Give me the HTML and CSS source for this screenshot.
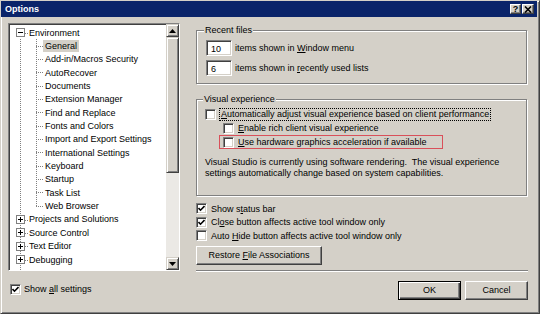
FILE: index.html
```html
<!DOCTYPE html>
<html lang="en">
<head>
    <meta charset="UTF-8">
    <title>Options</title>
    <link rel="stylesheet" href="styles.css">
</head>
<body>

<div class="dialog">
    <div class="titlebar">
        <span class="title">Options</span>
        <div class="caption-btns">
            <span class="cbtn help">?</span>
            <span class="cbtn close">
                <svg width="8" height="7" viewBox="0 0 8 7"><path d="M1 0.5 L7 6.5 M7 0.5 L1 6.5" stroke="#000" stroke-width="1.6"/></svg>
            </span>
        </div>
    </div>

    <div class="main">
        <div class="left">
            <div class="tree">
                <div class="tree-items">
                    <div class="node"><span class="exp open"></span><span class="node-label">Environment</span></div>
                    <div class="rest">
                        <div class="children">
                            <div class="leaf"><span class="leaf-label selected">General</span></div>
                            <div class="leaf"><span class="leaf-label">Add-in/Macros Security</span></div>
                            <div class="leaf"><span class="leaf-label">AutoRecover</span></div>
                            <div class="leaf"><span class="leaf-label">Documents</span></div>
                            <div class="leaf"><span class="leaf-label">Extension Manager</span></div>
                            <div class="leaf"><span class="leaf-label">Find and Replace</span></div>
                            <div class="leaf"><span class="leaf-label">Fonts and Colors</span></div>
                            <div class="leaf"><span class="leaf-label">Import and Export Settings</span></div>
                            <div class="leaf"><span class="leaf-label">International Settings</span></div>
                            <div class="leaf"><span class="leaf-label">Keyboard</span></div>
                            <div class="leaf"><span class="leaf-label">Startup</span></div>
                            <div class="leaf"><span class="leaf-label">Task List</span></div>
                            <div class="leaf"><span class="leaf-label">Web Browser</span></div>
                        </div>
                        <div class="node"><span class="exp"></span><span class="node-label">Projects and Solutions</span></div>
                        <div class="node"><span class="exp"></span><span class="node-label">Source Control</span></div>
                        <div class="node"><span class="exp"></span><span class="node-label">Text Editor</span></div>
                        <div class="node"><span class="exp"></span><span class="node-label">Debugging</span></div>
                        <div class="node-spacer"></div>
                    </div>
                </div>
                <div class="scrollbar">
                    <span class="sb-btn">
                        <svg width="7" height="4" viewBox="0 0 7 4"><polygon points="3.5,0 7,4 0,4" fill="#000"/></svg>
                    </span>
                    <span class="sb-thumb"></span>
                    <span class="sb-track"></span>
                    <span class="sb-btn">
                        <svg width="7" height="4" viewBox="0 0 7 4"><polygon points="0,0 7,0 3.5,4" fill="#000"/></svg>
                    </span>
                </div>
            </div>
            <div class="check show-all">
                <span class="box checked"><svg width="7" height="7" viewBox="0 0 7 7"><path d="M0.5 3 L2.5 5.2 L6.5 1" stroke="#000" stroke-width="1.6" fill="none"/></svg></span>
                <span>Show <u>a</u>ll settings</span>
            </div>
        </div>

        <div class="right">
            <fieldset class="group recent">
                <legend>Recent files</legend>
                <div class="num-row"><span class="textbox">10</span><span>items shown in <u>W</u>indow menu</span></div>
                <div class="num-row"><span class="textbox">6</span><span>items shown in <u>r</u>ecently used lists</span></div>
            </fieldset>

            <fieldset class="group visual">
                <legend>Visual experience</legend>
                <div class="check row1">
                    <span class="box"></span>
                    <span class="focused"><u>A</u>utomatically adjust visual experience based on client performance</span>
                </div>
                <div class="check row2">
                    <span class="box"></span>
                    <span><u>E</u>nable rich client visual experience</span>
                </div>
                <div class="check row3">
                    <span class="box"></span>
                    <span><u>U</u>se hardware graphics acceleration if available</span>
                </div>
                <p class="note">Visual Studio is currently using software rendering.&nbsp; The visual experience settings automatically change based on system capabilities.</p>
            </fieldset>

            <div class="options">
                <div class="check">
                    <span class="box checked"><svg width="7" height="7" viewBox="0 0 7 7"><path d="M0.5 3 L2.5 5.2 L6.5 1" stroke="#000" stroke-width="1.6" fill="none"/></svg></span>
                    <span>Show s<u>t</u>atus bar</span>
                </div>
                <div class="check">
                    <span class="box checked"><svg width="7" height="7" viewBox="0 0 7 7"><path d="M0.5 3 L2.5 5.2 L6.5 1" stroke="#000" stroke-width="1.6" fill="none"/></svg></span>
                    <span>Cl<u>o</u>se button affects active tool window only</span>
                </div>
                <div class="check">
                    <span class="box"></span>
                    <span>Auto <u>H</u>ide button affects active tool window only</span>
                </div>
            </div>

            <button class="btn restore">Restore <u>F</u>ile Associations</button>
            <div class="separator"></div>

            <div class="actions">
                <button class="btn default">OK</button>
                <button class="btn">Cancel</button>
            </div>
        </div>
    </div>
</div>

</body>
</html>
```

FILE: styles.css
```css
body {
    margin: 0;
    background: #d4d0c8;
    font-family: "Liberation Sans", Arial, sans-serif;
    font-size: 9px;
    color: #000;
}
u { text-decoration: underline; text-underline-offset: 1px; }

.dialog {
    width: 540px;
    height: 314px;
    box-sizing: border-box;
    border: 1px solid;
    border-color: #d4d0c8 #404040 #404040 #d4d0c8;
    box-shadow: inset 1px 1px #fff, inset -1px -1px #808080;
    padding: 0 2px 0 0;
    background: #d4d0c8;
    overflow: hidden;
}

/* title bar */
.titlebar {
    height: 16px;
    background: #0a246a;
    color: #fff;
    display: flex;
    align-items: center;
    justify-content: space-between;
    padding: 0 3px 0 4px;
}
.title { font-weight: bold; font-size: 9px; }
.caption-btns { display: flex; gap: 1px; }
.cbtn {
    width: 12px;
    height: 10px;
    box-sizing: border-box;
    background: #d4d0c8;
    color: #000;
    border: 1px solid;
    border-color: #fff #404040 #404040 #fff;
    box-shadow: inset -1px -1px #808080;
    display: flex;
    align-items: center;
    justify-content: center;
    font-weight: bold;
    font-size: 9px;
    line-height: 8px;
}
.cbtn.help { width: 11px; }

/* layout */
.main {
    display: flex;
    gap: 16px;
    padding: 6px 0 0 7px;
}
.left { width: 172px; }
.right { width: 332px; }

/* tree */
.tree {
    height: 248px;
    box-sizing: border-box;
    border: 1px solid;
    border-color: #808080 #fff #fff #808080;
    box-shadow: inset 1px 1px #404040;
    background: #fff;
    display: flex;
    padding: 1px 0 0 1px;
    overflow: hidden;
}
.tree-items {
    flex: 1;
    padding-top: 1px;
    overflow: hidden;
}
.node, .leaf {
    height: 13.35px;
    display: flex;
    align-items: center;
    white-space: nowrap;
}
.node { padding-left: 6px; }
.node-spacer { height: 13px; }
.exp {
    width: 9px;
    height: 9px;
    box-sizing: border-box;
    border: 1px solid #808080;
    background: #fff;
    position: relative;
    flex: none;
}
.exp::before {
    content: '';
    position: absolute;
    left: 1px;
    top: 3px;
    width: 5px;
    height: 1px;
    background: #000;
}
.exp::after {
    content: '';
    position: absolute;
    left: 3px;
    top: 1px;
    width: 1px;
    height: 5px;
    background: #000;
}
.exp.open::after { display: none; }
.node-label::before {
    content: '';
    display: inline-block;
    width: 3px;
    border-top: 1px dotted #808080;
    vertical-align: middle;
    margin-right: 1px;
}
.rest {
    background: repeating-linear-gradient(to bottom, #808080 0 1px, transparent 1px 2px) 10px 0 / 1px 100% no-repeat;
}
.children {
    background: repeating-linear-gradient(to bottom, #808080 0 1px, transparent 1px 2px) 26px 0 / 1px calc(100% - 6px) no-repeat;
}
.leaf { padding-left: 26px; }
.leaf::before {
    content: '';
    width: 7px;
    border-top: 1px dotted #808080;
}
.leaf-label { padding: 1px 2px; }
.leaf-label.selected { background: #d4d0c8; }

/* scrollbar */
.scrollbar {
    width: 13px;
    display: flex;
    flex-direction: column;
    margin-top: -1px;
}
.sb-btn, .sb-thumb {
    box-sizing: border-box;
    background: #d4d0c8;
    border: 1px solid;
    border-color: #d4d0c8 #404040 #404040 #d4d0c8;
    box-shadow: inset 1px 1px #fff, inset -1px -1px #808080;
}
.sb-btn {
    height: 13px;
    display: flex;
    align-items: center;
    justify-content: center;
}
.sb-thumb { height: 136px; }
.sb-track {
    flex: 1;
    background: #ebe9e5;
}

/* checkboxes */
.check {
    display: flex;
    align-items: center;
    gap: 4px;
    height: 14px;
    white-space: nowrap;
}
.box {
    width: 11px;
    height: 11px;
    box-sizing: border-box;
    background: #fff;
    border: 1px solid;
    border-color: #808080 #fff #fff #808080;
    box-shadow: inset 1px 1px #404040, inset -1px -1px #d4d0c8;
    display: flex;
    align-items: center;
    justify-content: center;
    flex: none;
}
.show-all {
    margin: 11px 0 0 2px;
    gap: 3px;
}

/* group boxes */
.group {
    margin: 0;
    border: 1px solid #808080;
    box-shadow: 1px 1px #fff, inset 1px 1px #fff;
    padding: 0 8px;
    width: 331px;
    box-sizing: border-box;
}
.group legend {
    padding: 0 1px;
    margin-left: -2px;
    background: #d4d0c8;
    line-height: 12px;
}
.recent {
    margin-top: 1px;
    padding: 4px 8px 7px 9px;
}
.num-row {
    display: flex;
    align-items: center;
    gap: 3px;
    height: 16px;
}
.num-row + .num-row { margin-top: 4px; }
.textbox {
    width: 26px;
    height: 16px;
    box-sizing: border-box;
    background: #fff;
    border: 1px solid;
    border-color: #808080 #fff #fff #808080;
    box-shadow: inset 1px 1px #404040, inset -1px -1px #d4d0c8;
    padding: 3px 0 0 4px;
    line-height: 10px;
}

.visual {
    margin-top: 9px;
    padding: 2px 8px 17px 8px;
}
.focused {
    outline: 1px dotted #000;
    outline-offset: 0;
    padding: 0 1px;
    line-height: 11px;
}
.row2 { padding-left: 18px; }
.row3 {
    margin-left: 14px;
    width: max-content;
    padding: 0 15px 0 3px;
    border: 1px solid #d9505a;
    height: 12px;
}
.note {
    margin: 8px 0 0;
    line-height: 10.5px;
}

.options {
    margin-top: 6px;
}
.options .check { height: 13.5px; }

/* buttons */
.btn {
    font: inherit;
    color: #000;
    background: #d4d0c8;
    border: 1px solid;
    border-color: #fff #404040 #404040 #fff;
    box-shadow: inset -1px -1px #808080;
    height: 19px;
    padding: 0;
}
.restore {
    display: block;
    width: 126px;
    margin-top: 3px;
}
.separator {
    margin-top: 5px;
    height: 1px;
    background: #808080;
    border-bottom: 1px solid #fff;
}
.actions {
    margin-top: 9px;
    display: flex;
    justify-content: flex-end;
    gap: 4px;
}
.actions .btn { width: 63px; }
.btn.default {
    border-color: #000;
    box-shadow: inset 1px 1px #fff, inset -1px -1px #404040, inset -2px -2px #808080;
}
```
